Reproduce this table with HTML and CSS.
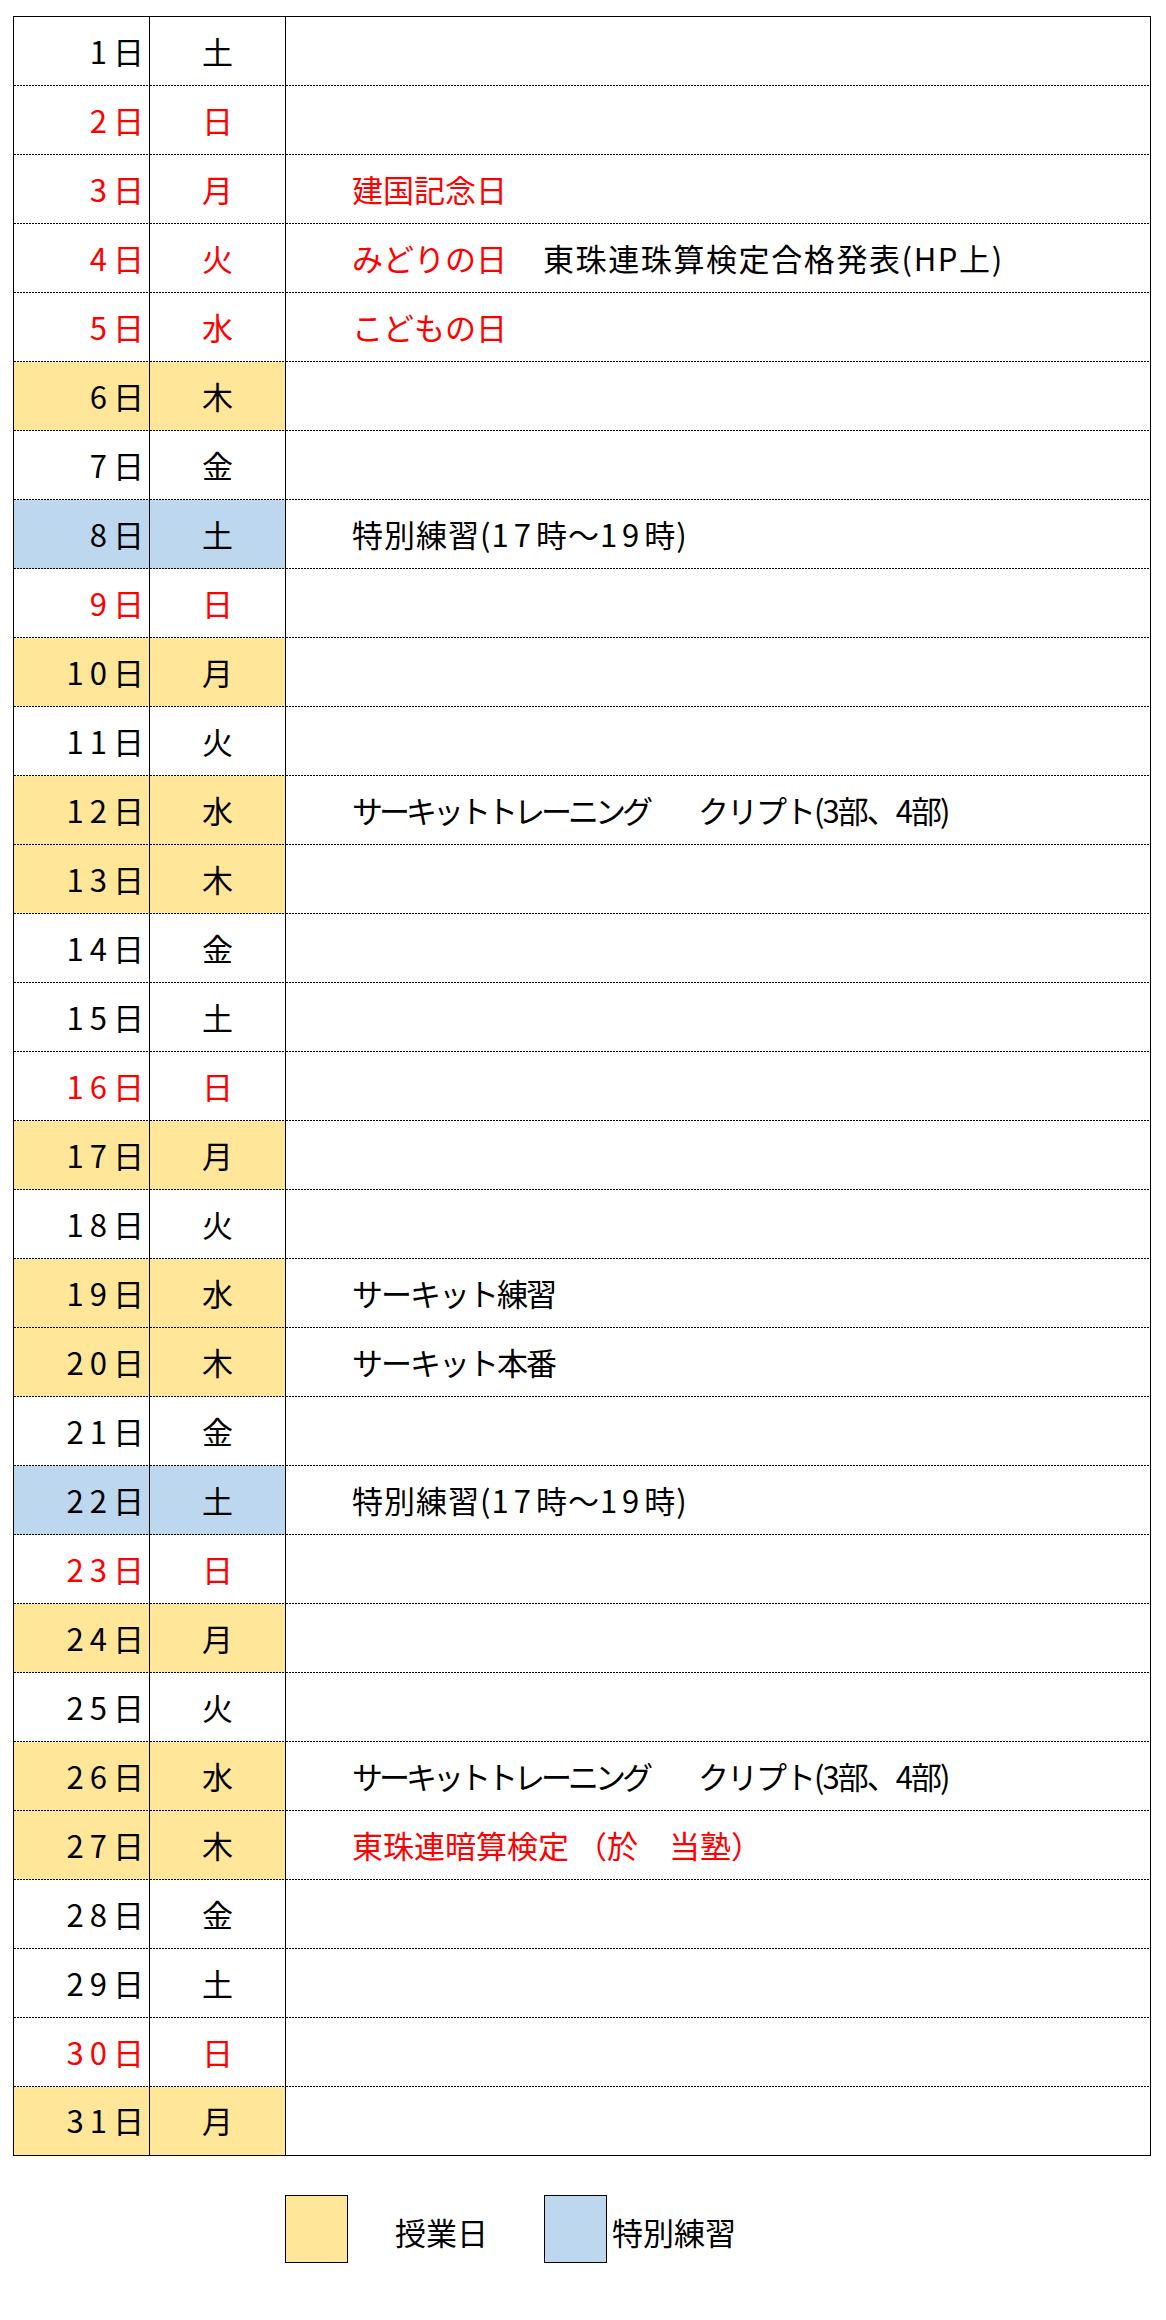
FILE: index.html
```html
<!DOCTYPE html>
<html lang="ja">
<head>
<meta charset="utf-8">
<title>5月予定</title>
<link rel="stylesheet" href="styles.css">
</head>
<body>
<div class="cal">
  <div class="row"><div class="c d"><span class="n">1</span>日</div><div class="c w">土</div><div class="c e"></div></div>
  <div class="row hol"><div class="c d"><span class="n">2</span>日</div><div class="c w">日</div><div class="c e"></div></div>
  <div class="row hol"><div class="c d"><span class="n">3</span>日</div><div class="c w">月</div><div class="c e"><span class="red">建国記念日</span></div></div>
  <div class="row hol"><div class="c d"><span class="n">4</span>日</div><div class="c w">火</div><div class="c e"><span class="red first4">みどりの日</span><span class="pass">東珠連珠算検定合格発表(HP上)</span></div></div>
  <div class="row hol"><div class="c d"><span class="n">5</span>日</div><div class="c w">水</div><div class="c e"><span class="red">こどもの日</span></div></div>
  <div class="row cls"><div class="c d"><span class="n">6</span>日</div><div class="c w">木</div><div class="c e"></div></div>
  <div class="row"><div class="c d"><span class="n">7</span>日</div><div class="c w">金</div><div class="c e"></div></div>
  <div class="row sp"><div class="c d"><span class="n">8</span>日</div><div class="c w">土</div><div class="c e"><span class="prac">特別練習(<span class="pn">17</span>時～<span class="pn">19</span>時)</span></div></div>
  <div class="row hol"><div class="c d"><span class="n">9</span>日</div><div class="c w">日</div><div class="c e"></div></div>
  <div class="row cls"><div class="c d"><span class="n">10</span>日</div><div class="c w">月</div><div class="c e"></div></div>
  <div class="row"><div class="c d"><span class="n">11</span>日</div><div class="c w">火</div><div class="c e"></div></div>
  <div class="row cls"><div class="c d"><span class="n">12</span>日</div><div class="c w">水</div><div class="c e"><span class="narrow first12">サーキットトレーニング</span><span class="crypt">クリプト(3部、4部)</span></div></div>
  <div class="row cls"><div class="c d"><span class="n">13</span>日</div><div class="c w">木</div><div class="c e"></div></div>
  <div class="row"><div class="c d"><span class="n">14</span>日</div><div class="c w">金</div><div class="c e"></div></div>
  <div class="row"><div class="c d"><span class="n">15</span>日</div><div class="c w">土</div><div class="c e"></div></div>
  <div class="row hol"><div class="c d"><span class="n">16</span>日</div><div class="c w">日</div><div class="c e"></div></div>
  <div class="row cls"><div class="c d"><span class="n">17</span>日</div><div class="c w">月</div><div class="c e"></div></div>
  <div class="row"><div class="c d"><span class="n">18</span>日</div><div class="c w">火</div><div class="c e"></div></div>
  <div class="row cls"><div class="c d"><span class="n">19</span>日</div><div class="c w">水</div><div class="c e"><span class="semi">サーキット練習</span></div></div>
  <div class="row cls"><div class="c d"><span class="n">20</span>日</div><div class="c w">木</div><div class="c e"><span class="semi">サーキット本番</span></div></div>
  <div class="row"><div class="c d"><span class="n">21</span>日</div><div class="c w">金</div><div class="c e"></div></div>
  <div class="row sp"><div class="c d"><span class="n">22</span>日</div><div class="c w">土</div><div class="c e"><span class="prac">特別練習(<span class="pn">17</span>時～<span class="pn">19</span>時)</span></div></div>
  <div class="row hol"><div class="c d"><span class="n">23</span>日</div><div class="c w">日</div><div class="c e"></div></div>
  <div class="row cls"><div class="c d"><span class="n">24</span>日</div><div class="c w">月</div><div class="c e"></div></div>
  <div class="row"><div class="c d"><span class="n">25</span>日</div><div class="c w">火</div><div class="c e"></div></div>
  <div class="row cls"><div class="c d"><span class="n">26</span>日</div><div class="c w">水</div><div class="c e"><span class="narrow first12">サーキットトレーニング</span><span class="crypt">クリプト(3部、4部)</span></div></div>
  <div class="row cls"><div class="c d"><span class="n">27</span>日</div><div class="c w">木</div><div class="c e"><span class="red">東珠連暗算検定 （於　当塾）</span></div></div>
  <div class="row"><div class="c d"><span class="n">28</span>日</div><div class="c w">金</div><div class="c e"></div></div>
  <div class="row"><div class="c d"><span class="n">29</span>日</div><div class="c w">土</div><div class="c e"></div></div>
  <div class="row hol"><div class="c d"><span class="n">30</span>日</div><div class="c w">日</div><div class="c e"></div></div>
  <div class="row cls"><div class="c d"><span class="n">31</span>日</div><div class="c w">月</div><div class="c e"></div></div>
</div>
<div class="legend">
  <div class="box box-cls"></div>
  <div class="lab lab-cls">授業日</div>
  <div class="box box-sp"></div>
  <div class="lab lab-sp">特別練習</div>
</div>
</body>
</html>
```
FILE: styles.css
```css
html, body {
  margin: 0;
  padding: 0;
  background: #fff;
}
body {
  font-family: "Noto Sans CJK JP", "Noto Sans", sans-serif;
  font-size: 31px;
  color: #000;
  width: 1166px;
  height: 2320px;
}
.cal {
  box-sizing: border-box;
  width: 1138px;
  margin: 16px 0 0 13px;
  border: 1px solid #000;
  display: flex;
  flex-direction: column;
}
.row {
  display: grid;
  grid-template-columns: 136px 136px 1fr;
  height: 69px;
}
.c {
  box-sizing: border-box;
  display: flex;
  align-items: center;
  padding-bottom: 2px;
  white-space: nowrap;
  line-height: 1;
  background-image: repeating-linear-gradient(to right, #000 0 2px, transparent 2px 3px);
  background-size: 100% 1px;
  background-position: left bottom;
  background-repeat: no-repeat;
}
.row:last-child {
  height: 68px;
}
.row:last-child .c {
  background-image: none;
  padding-bottom: 3px;
}
.d {
  justify-content: flex-end;
  padding-right: 5px;
  border-right: 1px solid #000;
}
.n {
  letter-spacing: 6px;
}
.w {
  justify-content: center;
  border-right: 1px solid #000;
}
.e {
  padding-left: 66px;
}
.hol .d, .hol .w, .red {
  color: #ff0000;
}
.cls .d, .cls .w {
  background-color: #ffe699;
}
.sp .d, .sp .w {
  background-color: #bdd7ee;
}
.first4 {
  display: inline-block;
  min-width: 191px;
}
.first12 {
  display: inline-block;
  min-width: 346px;
}
.narrow {
  letter-spacing: -4px;
}
.crypt {
  letter-spacing: -2px;
}
.pass {
  letter-spacing: 1.6px;
}
.semi {
  letter-spacing: -2px;
}
.prac {
  letter-spacing: 1px;
}
.pn {
  letter-spacing: 5px;
}
.legend {
  display: flex;
  align-items: center;
  margin: 39px 0 0 285px;
}
.box {
  box-sizing: border-box;
  width: 63px;
  height: 68px;
  border: 1px solid #000;
}
.box-cls {
  background: #ffe699;
}
.box-sp {
  background: #bdd7ee;
}
.lab {
  line-height: 1;
  padding-top: 4px;
}
.lab-cls {
  margin-left: 47px;
  width: 149px;
}
.lab-sp {
  margin-left: 5px;
}
```
